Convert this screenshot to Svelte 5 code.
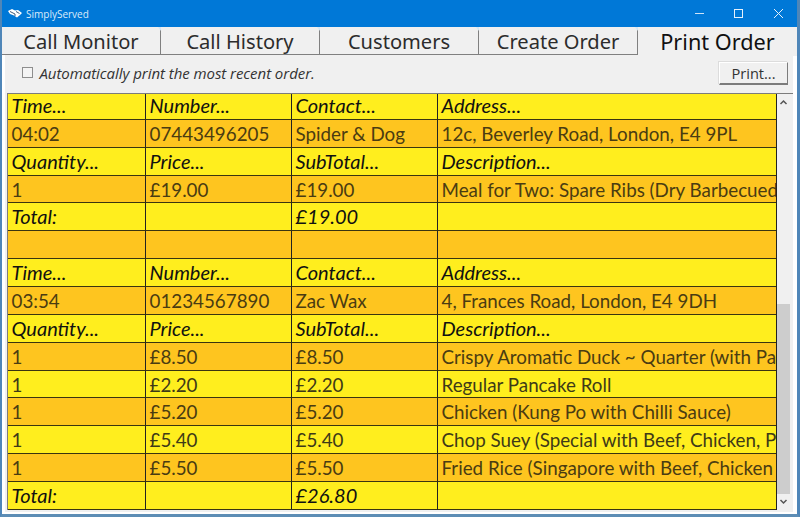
<script>
  const tabs = ['Call Monitor', 'Call History', 'Customers', 'Create Order'];
  const head1 = ['Time...', 'Number...', 'Contact...', 'Address...'];
  const head2 = ['Quantity...', 'Price...', 'SubTotal...', 'Description...'];
  const rows = [
    { c: head1, h: 1 },
    { c: ['04:02', '07443496205', 'Spider & Dog', '12c, Beverley Road, London, E4 9PL'] },
    { c: head2, h: 1 },
    { c: ['1', '£19.00', '£19.00', 'Meal for Two: Spare Ribs (Dry Barbecued'] },
    { c: ['Total:', '', '£19.00', ''], h: 1 },
    { c: ['', '', '', ''] },
    { c: head1, h: 1 },
    { c: ['03:54', '01234567890', 'Zac Wax', '4, Frances Road, London, E4 9DH'] },
    { c: head2, h: 1 },
    { c: ['1', '£8.50', '£8.50', 'Crispy Aromatic Duck ~ Quarter (with Pancakes'] },
    { c: ['1', '£2.20', '£2.20', 'Regular Pancake Roll'], y: 1 },
    { c: ['1', '£5.20', '£5.20', 'Chicken (Kung Po with Chilli Sauce)'] },
    { c: ['1', '£5.40', '£5.40', 'Chop Suey (Special with Beef, Chicken, Prawns'], y: 1 },
    { c: ['1', '£5.50', '£5.50', 'Fried Rice (Singapore with Beef, Chicken and'] },
    { c: ['Total:', '', '£26.80', ''], h: 1 },
  ];
</script>

<div class="window">
  <header class="titlebar">
    <svg class="logo" width="14" height="9" viewBox="0 0 14 9">
      <path d="M0 2 L4 0 L7 1.5 L10 1 L14 4 L12 6 L9 8.5 L6 6.5 L2 5 Z" fill="#fff" />
      <path d="M2 2.5 L7 5 L7 7 M8 2.5 L11.5 4.5" fill="none" stroke="#2b4a6b" stroke-width="0.9" />
    </svg>
    <span class="title">SimplyServed</span>
    <div class="controls">
      <svg width="40" height="26" viewBox="0 0 40 26"><path d="M16 12.5h9" stroke="#cfe3f7" /></svg>
      <svg width="40" height="26" viewBox="0 0 40 26"><rect x="15.5" y="8.5" width="8" height="8" fill="none" stroke="#e6f1fb" /></svg>
      <svg width="40" height="26" viewBox="0 0 40 26"><path d="M15 8l9 9M24 8l-9 9" stroke="#e6f1fb" /></svg>
    </div>
  </header>

  <div class="tabs">
    {#each tabs as t}
      <div class="tab">{t}<span class="notch"></span></div>
    {/each}
    <div class="tab active">Print Order</div>
  </div>

  <section class="page">
    <div class="toolbar">
      <label class="check"><span class="box"></span><em>Automatically print the most recent order.</em></label>
      <button class="print">Print...</button>
    </div>

    <div class="gridbox">
      <div class="grid">
        <div class="rows">
          {#each rows as r}
            <div class="row" class:head={r.h} class:yellow={r.y}>
              {#each r.c as cell}
                <div class="cell">{cell}</div>
              {/each}
            </div>
          {/each}
        </div>
      </div>
      <div class="scroll">
        <svg class="arrow" width="13" height="16" viewBox="0 0 13 16"><path d="M3.5 10l3-3 3 3" fill="none" stroke="#555" stroke-width="1.5" /></svg>
        <div class="track"><div class="thumb"></div></div>
        <svg class="arrow" width="13" height="16" viewBox="0 0 13 16"><path d="M3.5 6l3 3 3-3" fill="none" stroke="#555" stroke-width="1.5" /></svg>
      </div>
    </div>
  </section>
</div>

<style>
  :global(body) { margin: 0; background: #0078d7; }
  .window {
    width: 800px;
    height: 517px;
    box-sizing: border-box;
    background: #fff;
    display: flex;
    flex-direction: column;
    overflow: hidden;
    border-left: 2px solid #4f86b8;
    border-right: 3px solid #4f86b8;
    border-bottom: 3px solid #5d8db5;
  }
  .titlebar {
    height: 27px;
    flex: none;
    margin: 0 -3px 0 -2px;
    background: #0078d7;
    color: #dcebf9;
    display: flex;
    align-items: center;
    font: 10px "Open Sans", sans-serif;
  }
  .logo { margin: 0 4px 0 8px; }
  .controls { margin-left: auto; display: flex; margin-right: 1px; }
  .tabs {
    height: 28px;
    flex: none;
    display: flex;
    box-sizing: border-box;
    background: #fff;
  }
  .tab {
    position: relative;
    box-sizing: border-box;
    width: 159px;
    height: 28px;
    background: #f0f0f0;
    border-right: 1px solid #808080;
    border-bottom: 1px solid #808080;
    font: 20.1px/29px "Noto Sans", sans-serif;
    color: #2c2c2c;
    text-align: center;
  }
  .notch {
    position: absolute;
    top: 0;
    right: -4px;
    width: 0;
    height: 0;
    border-left: 3.5px solid transparent;
    border-right: 3.5px solid transparent;
    border-top: 4px solid #d5e6f5;
  }
  .tab.active {
    flex: 1;
    border: 0;
    color: #111;
    height: 29px;
    z-index: 1;
    font-size: 21.7px;
  }
  .page {
    flex: 1;
    min-height: 0;
    background: #f0f0f0;
    border-left: 3px solid #fff;
    border-right: 4px solid #fff;
    border-bottom: 2px solid #fff;
    display: flex;
    flex-direction: column;
    padding: 0 0 0 2px;
  }
  .toolbar {
    height: 38px;
    flex: none;
    display: flex;
    align-items: center;
    justify-content: space-between;
    padding-left: 15px;
  }
  .check { display: flex; align-items: center; gap: 6.5px; padding-bottom: 3px; }
  .box {
    width: 9px;
    height: 9px;
    border: 1px solid #8e8e8e;
    background: #f4f4f4;
  }
  .check em {
    font: italic 15px "Open Sans", sans-serif;
    color: #333;
    letter-spacing: -0.05px;
  }
  .print {
    width: 69px;
    height: 23px;
    margin: 0 5px 1px 0;
    background: #f0f0f0;
    border: 1px solid #fff;
    border-right-color: #7c7c7c;
    border-bottom: 2px solid #7c7c7c;
    box-shadow: -1px -1px 0 #dcdcdc;
    font: 14.6px "Open Sans", sans-serif;
    color: #333;
    padding: 0;
  }
  .gridbox {
    flex: 1;
    min-height: 0;
    display: flex;
    border-top: 1px solid #7c7c7c;
    border-left: 1px solid #7c7c7c;
    margin-bottom: 2px;
  }
  .grid {
    width: 769px;
    flex: none;
    overflow: hidden;
    border-right: 1px solid #222;
    box-sizing: border-box;
  }
  .rows {
    display: grid;
    grid-auto-rows: 27.86px;
    margin-top: -2px;
  }
  .row {
    display: grid;
    grid-template-columns: 138px 146px 146px minmax(0, 1fr);
    background: #fec51f;
    color: #4a3c12;
    font: 18.8px/27px Lato, sans-serif;
  }
  .row.yellow, .row.head { background: #ffee1e; }
  .row.yellow { color: #3e3a18; }
  .row.head { color: #111; font-style: italic; font-size: 20px; }
  .cell {
    box-sizing: border-box;
    padding-left: 3.5px;
    border-right: 1px solid #222;
    border-bottom: 1px solid #3a3410;
    white-space: nowrap;
    overflow: hidden;
  }
  .cell:last-child { border-right: 0; }
  .scroll {
    width: 16px;
    flex: none;
    display: flex;
    flex-direction: column;
    background: #f0f0f0;
  }
  .arrow { flex: none; }
  .track { flex: 1; display: flex; flex-direction: column; justify-content: flex-end; }
  .thumb { height: 190px; width: 13px; background: #cdcdcd; }
</style>
